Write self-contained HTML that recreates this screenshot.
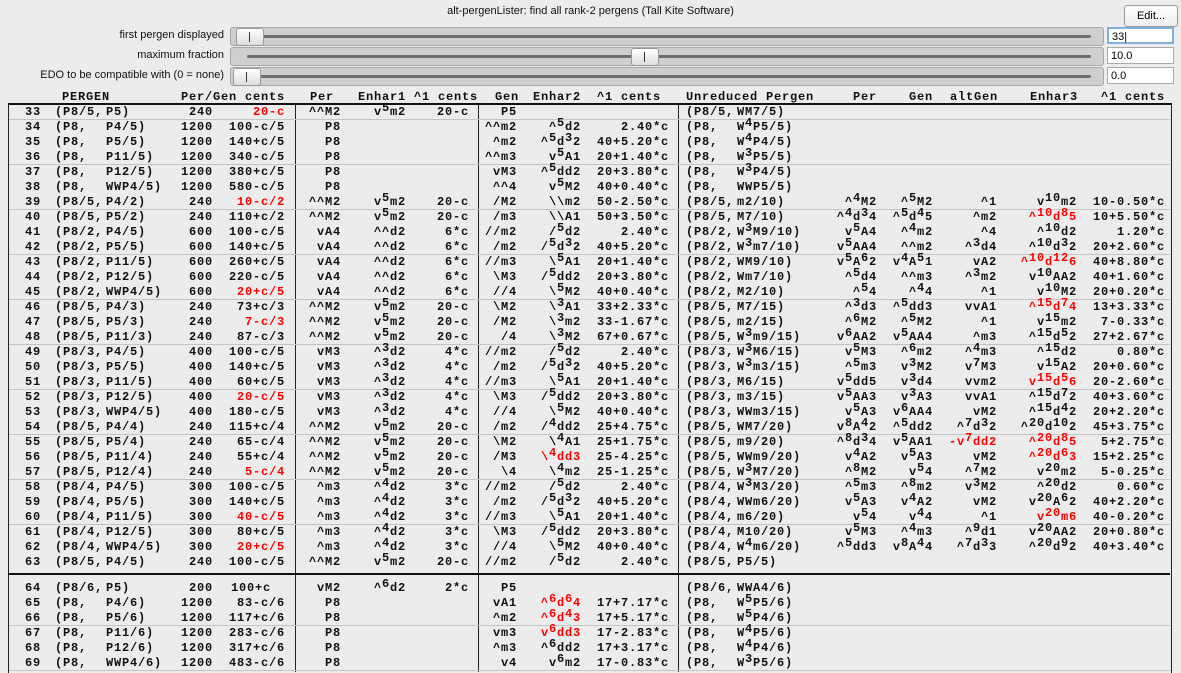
<!DOCTYPE html>
<html><head><meta charset="utf-8"><style>
body{margin:0;width:1181px;height:673px;background:#ececec;position:relative;overflow:hidden;font-family:"Liberation Sans",sans-serif}
.t{position:absolute;top:5px;left:0;width:1181px;text-align:center;font-size:11px;color:#111}
.lb{position:absolute;right:957px;font-size:11px;color:#111}
.tr{position:absolute;left:230px;width:872px;height:17px;background:#cfcfcf;border:1px solid #a8a8a8;border-radius:3px}
.tr i{position:absolute;left:16px;right:12px;top:7px;height:3px;background:#6e6e6e;border-radius:2px}
.th{position:absolute;width:26px;height:16px;top:0;background:linear-gradient(#fff,#ddd);border:1px solid #999;border-radius:3px}
.th b{position:absolute;left:12px;top:3px;width:1px;height:10px;background:#333}
.in{position:absolute;left:1107px;width:67px;height:17px;background:#fff;border:1px solid #aaa;font-size:11px;line-height:17px;padding-left:3px;box-sizing:border-box}
.btn{position:absolute;left:1124px;top:5px;width:52px;height:20px;background:linear-gradient(#fff,#eee);border:1px solid #999;border-radius:3px;font-size:11px;text-align:center;line-height:20px}
.m{font-family:"Liberation Mono",monospace;font-weight:bold;font-size:12px;letter-spacing:0.8px;color:#111}
.r{position:absolute;left:0;width:1181px;height:15px;line-height:15px}
.r span{position:absolute;white-space:pre;top:1px}
sup{font-size:inherit;vertical-align:0;position:relative;top:-4px;line-height:0}
.n{right:1140px}.p{left:55px}.q{left:106px}.a{right:968px}.b{right:896px}.c{right:840px}.d{right:775px}.e{right:712px}.f{right:664px}.g{right:600px}.h{right:512px}.u{left:686px}.v{left:737px}.i{right:304px}.j{right:248px}.k{right:184px}.l{right:104px}.z{right:16px}
.red{color:#f00}
.hl{position:absolute;left:9px;width:1161px;height:1px;background:#c4c4c4}
.vl{position:absolute;top:104px;height:568px;width:1px;background:#222}
</style></head><body>
<div class="t">alt-pergenLister: find all rank-2 pergens (Tall Kite Software)</div>
<div class="btn">Edit...</div>
<div class="lb" style="top:29px">first pergen displayed</div>
<div class="lb" style="top:49px">maximum fraction</div>
<div class="lb" style="top:69px">EDO to be compatible with (0 = none)</div>
<div class="tr" style="top:27px"><i></i><div class="th" style="left:5px"><b></b></div></div>
<div class="tr" style="top:47px"><i></i><div class="th" style="left:400px"><b></b></div></div>
<div class="tr" style="top:67px"><i></i><div class="th" style="left:2px"><b></b></div></div>
<div class="in" style="top:27px;border:2px solid #7fb0e0">33|</div>
<div class="in" style="top:47px">10.0</div>
<div class="in" style="top:67px">0.0</div>

<div class="m">
<div class="r" style="top:89px"><span style="left:62px">PERGEN</span><span style="left:181px">Per/Gen cents</span><span style="left:310px">Per</span><span style="left:358px">Enhar1 ^1 cents</span><span style="left:495px">Gen</span><span style="left:533px">Enhar2</span><span style="left:597px">^1 cents</span><span style="left:686px">Unreduced Pergen</span><span style="left:853px">Per</span><span style="left:909px">Gen</span><span style="left:950px">altGen</span><span style="left:1030px">Enhar3</span><span style="left:1101px">^1 cents</span></div>

<div style="position:absolute;left:8px;top:103px;width:1162px;height:568px;border:1px solid #222;border-top:2px solid #111;border-bottom:0"></div>
<div class="vl" style="left:295px"></div><div class="vl" style="left:478px"></div><div class="vl" style="left:678px"></div>
<div class="hl" style="top:119px"></div><div class="hl" style="top:164px"></div><div class="hl" style="top:209px"></div><div class="hl" style="top:254px"></div><div class="hl" style="top:299px"></div><div class="hl" style="top:344px"></div><div class="hl" style="top:389px"></div><div class="hl" style="top:434px"></div><div class="hl" style="top:479px"></div><div class="hl" style="top:524px"></div>
<div class="hl" style="top:573px;height:2px;background:#111"></div><div class="hl" style="top:625px"></div><div class="hl" style="top:670px"></div>

<div class="r" style="top:104px"><span class="n">33</span><span class="p">(P8/5,</span><span class="q">P5)</span><span class="a">240</span><span class="b red">20-c</span><span class="c">^^M2</span><span class="d">v<sup>5</sup>m2</span><span class="e">20-c</span><span class="f">P5</span><span class="u">(P8/5,</span><span class="v">WM7/5)</span></div>
<div class="r" style="top:119px"><span class="n">34</span><span class="p">(P8,</span><span class="q">P4/5)</span><span class="a">1200</span><span class="b">100-c/5</span><span class="c">P8</span><span class="f">^^m2</span><span class="g">^<sup>5</sup>d2</span><span class="h">2.40*c</span><span class="u">(P8,</span><span class="v">W<sup>4</sup>P5/5)</span></div>
<div class="r" style="top:134px"><span class="n">35</span><span class="p">(P8,</span><span class="q">P5/5)</span><span class="a">1200</span><span class="b">140+c/5</span><span class="c">P8</span><span class="f">^m2</span><span class="g">^<sup>5</sup>d<sup>3</sup>2</span><span class="h">40+5.20*c</span><span class="u">(P8,</span><span class="v">W<sup>4</sup>P4/5)</span></div>
<div class="r" style="top:149px"><span class="n">36</span><span class="p">(P8,</span><span class="q">P11/5)</span><span class="a">1200</span><span class="b">340-c/5</span><span class="c">P8</span><span class="f">^^m3</span><span class="g">v<sup>5</sup>A1</span><span class="h">20+1.40*c</span><span class="u">(P8,</span><span class="v">W<sup>3</sup>P5/5)</span></div>
<div class="r" style="top:164px"><span class="n">37</span><span class="p">(P8,</span><span class="q">P12/5)</span><span class="a">1200</span><span class="b">380+c/5</span><span class="c">P8</span><span class="f">vM3</span><span class="g">^<sup>5</sup>dd2</span><span class="h">20+3.80*c</span><span class="u">(P8,</span><span class="v">W<sup>3</sup>P4/5)</span></div>
<div class="r" style="top:179px"><span class="n">38</span><span class="p">(P8,</span><span class="q">WWP4/5)</span><span class="a">1200</span><span class="b">580-c/5</span><span class="c">P8</span><span class="f">^^4</span><span class="g">v<sup>5</sup>M2</span><span class="h">40+0.40*c</span><span class="u">(P8,</span><span class="v">WWP5/5)</span></div>
<div class="r" style="top:194px"><span class="n">39</span><span class="p">(P8/5,</span><span class="q">P4/2)</span><span class="a">240</span><span class="b red">10-c/2</span><span class="c">^^M2</span><span class="d">v<sup>5</sup>m2</span><span class="e">20-c</span><span class="f">/M2</span><span class="g">\\m2</span><span class="h">50-2.50*c</span><span class="u">(P8/5,</span><span class="v">m2/10)</span><span class="i">^<sup>4</sup>M2</span><span class="j">^<sup>5</sup>M2</span><span class="k">^1</span><span class="l">v<sup>10</sup>m2</span><span class="z">10-0.50*c</span></div>
<div class="r" style="top:209px"><span class="n">40</span><span class="p">(P8/5,</span><span class="q">P5/2)</span><span class="a">240</span><span class="b">110+c/2</span><span class="c">^^M2</span><span class="d">v<sup>5</sup>m2</span><span class="e">20-c</span><span class="f">/m3</span><span class="g">\\A1</span><span class="h">50+3.50*c</span><span class="u">(P8/5,</span><span class="v">M7/10)</span><span class="i">^<sup>4</sup>d<sup>3</sup>4</span><span class="j">^<sup>5</sup>d<sup>4</sup>5</span><span class="k">^m2</span><span class="l red">^<sup>10</sup>d<sup>8</sup>5</span><span class="z">10+5.50*c</span></div>
<div class="r" style="top:224px"><span class="n">41</span><span class="p">(P8/2,</span><span class="q">P4/5)</span><span class="a">600</span><span class="b">100-c/5</span><span class="c">vA4</span><span class="d">^^d2</span><span class="e">6*c</span><span class="f">//m2</span><span class="g">/<sup>5</sup>d2</span><span class="h">2.40*c</span><span class="u">(P8/2,</span><span class="v">W<sup>3</sup>M9/10)</span><span class="i">v<sup>5</sup>A4</span><span class="j">^<sup>4</sup>m2</span><span class="k">^4</span><span class="l">^<sup>10</sup>d2</span><span class="z">1.20*c</span></div>
<div class="r" style="top:239px"><span class="n">42</span><span class="p">(P8/2,</span><span class="q">P5/5)</span><span class="a">600</span><span class="b">140+c/5</span><span class="c">vA4</span><span class="d">^^d2</span><span class="e">6*c</span><span class="f">/m2</span><span class="g">/<sup>5</sup>d<sup>3</sup>2</span><span class="h">40+5.20*c</span><span class="u">(P8/2,</span><span class="v">W<sup>3</sup>m7/10)</span><span class="i">v<sup>5</sup>AA4</span><span class="j">^^m2</span><span class="k">^<sup>3</sup>d4</span><span class="l">^<sup>10</sup>d<sup>3</sup>2</span><span class="z">20+2.60*c</span></div>
<div class="r" style="top:254px"><span class="n">43</span><span class="p">(P8/2,</span><span class="q">P11/5)</span><span class="a">600</span><span class="b">260+c/5</span><span class="c">vA4</span><span class="d">^^d2</span><span class="e">6*c</span><span class="f">//m3</span><span class="g">\<sup>5</sup>A1</span><span class="h">20+1.40*c</span><span class="u">(P8/2,</span><span class="v">WM9/10)</span><span class="i">v<sup>5</sup>A<sup>6</sup>2</span><span class="j">v<sup>4</sup>A<sup>5</sup>1</span><span class="k">vA2</span><span class="l red">^<sup>10</sup>d<sup>12</sup>6</span><span class="z">40+8.80*c</span></div>
<div class="r" style="top:269px"><span class="n">44</span><span class="p">(P8/2,</span><span class="q">P12/5)</span><span class="a">600</span><span class="b">220-c/5</span><span class="c">vA4</span><span class="d">^^d2</span><span class="e">6*c</span><span class="f">\M3</span><span class="g">/<sup>5</sup>dd2</span><span class="h">20+3.80*c</span><span class="u">(P8/2,</span><span class="v">Wm7/10)</span><span class="i">^<sup>5</sup>d4</span><span class="j">^^m3</span><span class="k">^<sup>3</sup>m2</span><span class="l">v<sup>10</sup>AA2</span><span class="z">40+1.60*c</span></div>
<div class="r" style="top:284px"><span class="n">45</span><span class="p">(P8/2,</span><span class="q">WWP4/5)</span><span class="a">600</span><span class="b red">20+c/5</span><span class="c">vA4</span><span class="d">^^d2</span><span class="e">6*c</span><span class="f">//4</span><span class="g">\<sup>5</sup>M2</span><span class="h">40+0.40*c</span><span class="u">(P8/2,</span><span class="v">M2/10)</span><span class="i">^<sup>5</sup>4</span><span class="j">^<sup>4</sup>4</span><span class="k">^1</span><span class="l">v<sup>10</sup>M2</span><span class="z">20+0.20*c</span></div>
<div class="r" style="top:299px"><span class="n">46</span><span class="p">(P8/5,</span><span class="q">P4/3)</span><span class="a">240</span><span class="b">73+c/3</span><span class="c">^^M2</span><span class="d">v<sup>5</sup>m2</span><span class="e">20-c</span><span class="f">\M2</span><span class="g">\<sup>3</sup>A1</span><span class="h">33+2.33*c</span><span class="u">(P8/5,</span><span class="v">M7/15)</span><span class="i">^<sup>3</sup>d3</span><span class="j">^<sup>5</sup>dd3</span><span class="k">vvA1</span><span class="l red">^<sup>15</sup>d<sup>7</sup>4</span><span class="z">13+3.33*c</span></div>
<div class="r" style="top:314px"><span class="n">47</span><span class="p">(P8/5,</span><span class="q">P5/3)</span><span class="a">240</span><span class="b red">7-c/3</span><span class="c">^^M2</span><span class="d">v<sup>5</sup>m2</span><span class="e">20-c</span><span class="f">/M2</span><span class="g">\<sup>3</sup>m2</span><span class="h">33-1.67*c</span><span class="u">(P8/5,</span><span class="v">m2/15)</span><span class="i">^<sup>6</sup>M2</span><span class="j">^<sup>5</sup>M2</span><span class="k">^1</span><span class="l">v<sup>15</sup>m2</span><span class="z">7-0.33*c</span></div>
<div class="r" style="top:329px"><span class="n">48</span><span class="p">(P8/5,</span><span class="q">P11/3)</span><span class="a">240</span><span class="b">87-c/3</span><span class="c">^^M2</span><span class="d">v<sup>5</sup>m2</span><span class="e">20-c</span><span class="f">/4</span><span class="g">\<sup>3</sup>M2</span><span class="h">67+0.67*c</span><span class="u">(P8/5,</span><span class="v">W<sup>3</sup>m9/15)</span><span class="i">v<sup>6</sup>AA2</span><span class="j">v<sup>5</sup>AA4</span><span class="k">^m3</span><span class="l">^<sup>15</sup>d<sup>5</sup>2</span><span class="z">27+2.67*c</span></div>
<div class="r" style="top:344px"><span class="n">49</span><span class="p">(P8/3,</span><span class="q">P4/5)</span><span class="a">400</span><span class="b">100-c/5</span><span class="c">vM3</span><span class="d">^<sup>3</sup>d2</span><span class="e">4*c</span><span class="f">//m2</span><span class="g">/<sup>5</sup>d2</span><span class="h">2.40*c</span><span class="u">(P8/3,</span><span class="v">W<sup>3</sup>M6/15)</span><span class="i">v<sup>5</sup>M3</span><span class="j">^<sup>6</sup>m2</span><span class="k">^<sup>4</sup>m3</span><span class="l">^<sup>15</sup>d2</span><span class="z">0.80*c</span></div>
<div class="r" style="top:359px"><span class="n">50</span><span class="p">(P8/3,</span><span class="q">P5/5)</span><span class="a">400</span><span class="b">140+c/5</span><span class="c">vM3</span><span class="d">^<sup>3</sup>d2</span><span class="e">4*c</span><span class="f">/m2</span><span class="g">/<sup>5</sup>d<sup>3</sup>2</span><span class="h">40+5.20*c</span><span class="u">(P8/3,</span><span class="v">W<sup>3</sup>m3/15)</span><span class="i">^<sup>5</sup>m3</span><span class="j">v<sup>3</sup>M2</span><span class="k">v<sup>7</sup>M3</span><span class="l">v<sup>15</sup>A2</span><span class="z">20+0.60*c</span></div>
<div class="r" style="top:374px"><span class="n">51</span><span class="p">(P8/3,</span><span class="q">P11/5)</span><span class="a">400</span><span class="b">60+c/5</span><span class="c">vM3</span><span class="d">^<sup>3</sup>d2</span><span class="e">4*c</span><span class="f">//m3</span><span class="g">\<sup>5</sup>A1</span><span class="h">20+1.40*c</span><span class="u">(P8/3,</span><span class="v">M6/15)</span><span class="i">v<sup>5</sup>dd5</span><span class="j">v<sup>3</sup>d4</span><span class="k">vvm2</span><span class="l red">v<sup>15</sup>d<sup>5</sup>6</span><span class="z">20-2.60*c</span></div>
<div class="r" style="top:389px"><span class="n">52</span><span class="p">(P8/3,</span><span class="q">P12/5)</span><span class="a">400</span><span class="b red">20-c/5</span><span class="c">vM3</span><span class="d">^<sup>3</sup>d2</span><span class="e">4*c</span><span class="f">\M3</span><span class="g">/<sup>5</sup>dd2</span><span class="h">20+3.80*c</span><span class="u">(P8/3,</span><span class="v">m3/15)</span><span class="i">v<sup>5</sup>AA3</span><span class="j">v<sup>3</sup>A3</span><span class="k">vvA1</span><span class="l">^<sup>15</sup>d<sup>7</sup>2</span><span class="z">40+3.60*c</span></div>
<div class="r" style="top:404px"><span class="n">53</span><span class="p">(P8/3,</span><span class="q">WWP4/5)</span><span class="a">400</span><span class="b">180-c/5</span><span class="c">vM3</span><span class="d">^<sup>3</sup>d2</span><span class="e">4*c</span><span class="f">//4</span><span class="g">\<sup>5</sup>M2</span><span class="h">40+0.40*c</span><span class="u">(P8/3,</span><span class="v">WWm3/15)</span><span class="i">v<sup>5</sup>A3</span><span class="j">v<sup>6</sup>AA4</span><span class="k">vM2</span><span class="l">^<sup>15</sup>d<sup>4</sup>2</span><span class="z">20+2.20*c</span></div>
<div class="r" style="top:419px"><span class="n">54</span><span class="p">(P8/5,</span><span class="q">P4/4)</span><span class="a">240</span><span class="b">115+c/4</span><span class="c">^^M2</span><span class="d">v<sup>5</sup>m2</span><span class="e">20-c</span><span class="f">/m2</span><span class="g">/<sup>4</sup>dd2</span><span class="h">25+4.75*c</span><span class="u">(P8/5,</span><span class="v">WM7/20)</span><span class="i">v<sup>8</sup>A<sup>4</sup>2</span><span class="j">^<sup>5</sup>dd2</span><span class="k">^<sup>7</sup>d<sup>3</sup>2</span><span class="l">^<sup>20</sup>d<sup>10</sup>2</span><span class="z">45+3.75*c</span></div>
<div class="r" style="top:434px"><span class="n">55</span><span class="p">(P8/5,</span><span class="q">P5/4)</span><span class="a">240</span><span class="b">65-c/4</span><span class="c">^^M2</span><span class="d">v<sup>5</sup>m2</span><span class="e">20-c</span><span class="f">\M2</span><span class="g">\<sup>4</sup>A1</span><span class="h">25+1.75*c</span><span class="u">(P8/5,</span><span class="v">m9/20)</span><span class="i">^<sup>8</sup>d<sup>3</sup>4</span><span class="j">v<sup>5</sup>AA1</span><span class="k red">-v<sup>7</sup>dd2</span><span class="l red">^<sup>20</sup>d<sup>8</sup>5</span><span class="z">5+2.75*c</span></div>
<div class="r" style="top:449px"><span class="n">56</span><span class="p">(P8/5,</span><span class="q">P11/4)</span><span class="a">240</span><span class="b">55+c/4</span><span class="c">^^M2</span><span class="d">v<sup>5</sup>m2</span><span class="e">20-c</span><span class="f">/M3</span><span class="g red">\<sup>4</sup>dd3</span><span class="h">25-4.25*c</span><span class="u">(P8/5,</span><span class="v">WWm9/20)</span><span class="i">v<sup>4</sup>A2</span><span class="j">v<sup>5</sup>A3</span><span class="k">vM2</span><span class="l red">^<sup>20</sup>d<sup>6</sup>3</span><span class="z">15+2.25*c</span></div>
<div class="r" style="top:464px"><span class="n">57</span><span class="p">(P8/5,</span><span class="q">P12/4)</span><span class="a">240</span><span class="b red">5-c/4</span><span class="c">^^M2</span><span class="d">v<sup>5</sup>m2</span><span class="e">20-c</span><span class="f">\4</span><span class="g">\<sup>4</sup>m2</span><span class="h">25-1.25*c</span><span class="u">(P8/5,</span><span class="v">W<sup>3</sup>M7/20)</span><span class="i">^<sup>8</sup>M2</span><span class="j">v<sup>5</sup>4</span><span class="k">^<sup>7</sup>M2</span><span class="l">v<sup>20</sup>m2</span><span class="z">5-0.25*c</span></div>
<div class="r" style="top:479px"><span class="n">58</span><span class="p">(P8/4,</span><span class="q">P4/5)</span><span class="a">300</span><span class="b">100-c/5</span><span class="c">^m3</span><span class="d">^<sup>4</sup>d2</span><span class="e">3*c</span><span class="f">//m2</span><span class="g">/<sup>5</sup>d2</span><span class="h">2.40*c</span><span class="u">(P8/4,</span><span class="v">W<sup>3</sup>M3/20)</span><span class="i">^<sup>5</sup>m3</span><span class="j">^<sup>8</sup>m2</span><span class="k">v<sup>3</sup>M2</span><span class="l">^<sup>20</sup>d2</span><span class="z">0.60*c</span></div>
<div class="r" style="top:494px"><span class="n">59</span><span class="p">(P8/4,</span><span class="q">P5/5)</span><span class="a">300</span><span class="b">140+c/5</span><span class="c">^m3</span><span class="d">^<sup>4</sup>d2</span><span class="e">3*c</span><span class="f">/m2</span><span class="g">/<sup>5</sup>d<sup>3</sup>2</span><span class="h">40+5.20*c</span><span class="u">(P8/4,</span><span class="v">WWm6/20)</span><span class="i">v<sup>5</sup>A3</span><span class="j">v<sup>4</sup>A2</span><span class="k">vM2</span><span class="l">v<sup>20</sup>A<sup>6</sup>2</span><span class="z">40+2.20*c</span></div>
<div class="r" style="top:509px"><span class="n">60</span><span class="p">(P8/4,</span><span class="q">P11/5)</span><span class="a">300</span><span class="b red">40-c/5</span><span class="c">^m3</span><span class="d">^<sup>4</sup>d2</span><span class="e">3*c</span><span class="f">//m3</span><span class="g">\<sup>5</sup>A1</span><span class="h">20+1.40*c</span><span class="u">(P8/4,</span><span class="v">m6/20)</span><span class="i">v<sup>5</sup>4</span><span class="j">v<sup>4</sup>4</span><span class="k">^1</span><span class="l red">v<sup>20</sup>m6</span><span class="z">40-0.20*c</span></div>
<div class="r" style="top:524px"><span class="n">61</span><span class="p">(P8/4,</span><span class="q">P12/5)</span><span class="a">300</span><span class="b">80+c/5</span><span class="c">^m3</span><span class="d">^<sup>4</sup>d2</span><span class="e">3*c</span><span class="f">\M3</span><span class="g">/<sup>5</sup>dd2</span><span class="h">20+3.80*c</span><span class="u">(P8/4,</span><span class="v">M10/20)</span><span class="i">v<sup>5</sup>M3</span><span class="j">^<sup>4</sup>m3</span><span class="k">^<sup>9</sup>d1</span><span class="l">v<sup>20</sup>AA2</span><span class="z">20+0.80*c</span></div>
<div class="r" style="top:539px"><span class="n">62</span><span class="p">(P8/4,</span><span class="q">WWP4/5)</span><span class="a">300</span><span class="b red">20+c/5</span><span class="c">^m3</span><span class="d">^<sup>4</sup>d2</span><span class="e">3*c</span><span class="f">//4</span><span class="g">\<sup>5</sup>M2</span><span class="h">40+0.40*c</span><span class="u">(P8/4,</span><span class="v">W<sup>4</sup>m6/20)</span><span class="i">^<sup>5</sup>dd3</span><span class="j">v<sup>8</sup>A<sup>4</sup>4</span><span class="k">^<sup>7</sup>d<sup>3</sup>3</span><span class="l">^<sup>20</sup>d<sup>9</sup>2</span><span class="z">40+3.40*c</span></div>
<div class="r" style="top:554px"><span class="n">63</span><span class="p">(P8/5,</span><span class="q">P4/5)</span><span class="a">240</span><span class="b">100-c/5</span><span class="c">^^M2</span><span class="d">v<sup>5</sup>m2</span><span class="e">20-c</span><span class="f">//m2</span><span class="g">/<sup>5</sup>d2</span><span class="h">2.40*c</span><span class="u">(P8/5,</span><span class="v">P5/5)</span></div>
<div class="r" style="top:580px"><span class="n">64</span><span class="p">(P8/6,</span><span class="q">P5)</span><span class="a">200</span><span style="left:231px">100+c</span><span class="c">vM2</span><span class="d">^<sup>6</sup>d2</span><span class="e">2*c</span><span class="f">P5</span><span class="u">(P8/6,</span><span class="v">WWA4/6)</span></div>
<div class="r" style="top:595px"><span class="n">65</span><span class="p">(P8,</span><span class="q">P4/6)</span><span class="a">1200</span><span class="b">83-c/6</span><span class="c">P8</span><span class="f">vA1</span><span class="g red">^<sup>6</sup>d<sup>6</sup>4</span><span class="h">17+7.17*c</span><span class="u">(P8,</span><span class="v">W<sup>5</sup>P5/6)</span></div>
<div class="r" style="top:610px"><span class="n">66</span><span class="p">(P8,</span><span class="q">P5/6)</span><span class="a">1200</span><span class="b">117+c/6</span><span class="c">P8</span><span class="f">^m2</span><span class="g red">^<sup>6</sup>d<sup>4</sup>3</span><span class="h">17+5.17*c</span><span class="u">(P8,</span><span class="v">W<sup>5</sup>P4/6)</span></div>
<div class="r" style="top:625px"><span class="n">67</span><span class="p">(P8,</span><span class="q">P11/6)</span><span class="a">1200</span><span class="b">283-c/6</span><span class="c">P8</span><span class="f">vm3</span><span class="g red">v<sup>6</sup>dd3</span><span class="h">17-2.83*c</span><span class="u">(P8,</span><span class="v">W<sup>4</sup>P5/6)</span></div>
<div class="r" style="top:640px"><span class="n">68</span><span class="p">(P8,</span><span class="q">P12/6)</span><span class="a">1200</span><span class="b">317+c/6</span><span class="c">P8</span><span class="f">^m3</span><span class="g">^<sup>6</sup>dd2</span><span class="h">17+3.17*c</span><span class="u">(P8,</span><span class="v">W<sup>4</sup>P4/6)</span></div>
<div class="r" style="top:655px"><span class="n">69</span><span class="p">(P8,</span><span class="q">WWP4/6)</span><span class="a">1200</span><span class="b">483-c/6</span><span class="c">P8</span><span class="f">v4</span><span class="g">v<sup>6</sup>m2</span><span class="h">17-0.83*c</span><span class="u">(P8,</span><span class="v">W<sup>3</sup>P5/6)</span></div>
</div>
</body></html>
